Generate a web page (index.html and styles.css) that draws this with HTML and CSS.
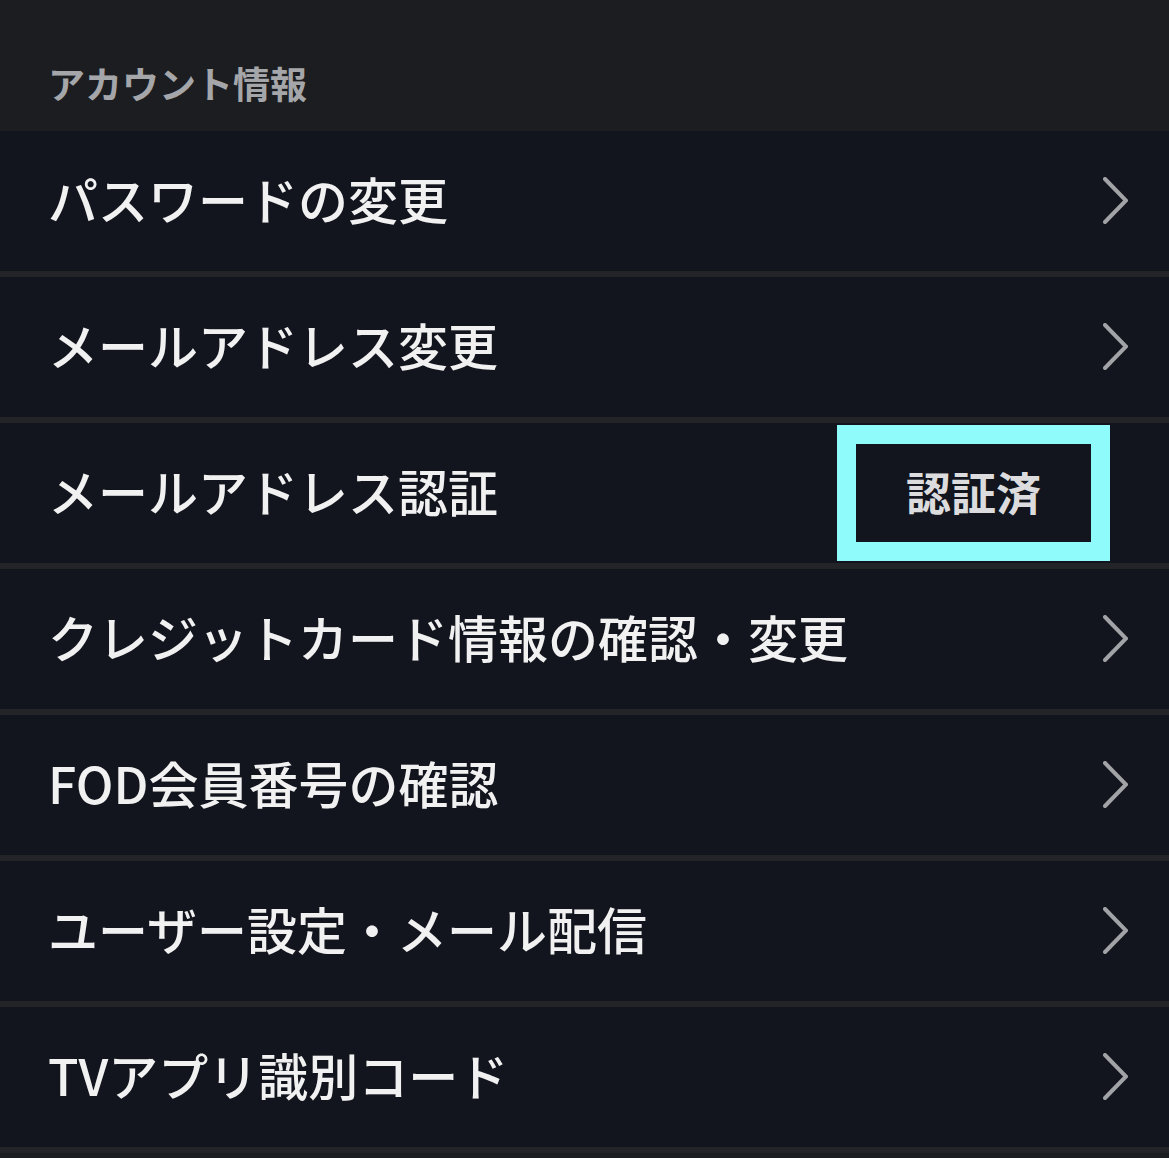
FILE: index.html
```html
<!DOCTYPE html>
<html lang="ja">
<head>
<meta charset="utf-8">
<title>アカウント情報</title>
<link rel="stylesheet" href="styles.css">
</head>
<body>
<div class="page">
  <div class="section-title">アカウント情報</div>
  <ul class="menu">
    <li class="row"><span class="label">パスワードの変更</span><svg class="chev" viewBox="0 0 25 47"><polyline points="2,2 23,23.5 2,45"/></svg></li>
    <li class="row"><span class="label">メールアドレス変更</span><svg class="chev" viewBox="0 0 25 47"><polyline points="2,2 23,23.5 2,45"/></svg></li>
    <li class="row"><span class="label">メールアドレス認証</span><span class="badge">認証済</span></li>
    <li class="row"><span class="label">クレジットカード情報の確認・変更</span><svg class="chev" viewBox="0 0 25 47"><polyline points="2,2 23,23.5 2,45"/></svg></li>
    <li class="row"><span class="label">FOD会員番号の確認</span><svg class="chev" viewBox="0 0 25 47"><polyline points="2,2 23,23.5 2,45"/></svg></li>
    <li class="row"><span class="label">ユーザー設定・メール配信</span><svg class="chev" viewBox="0 0 25 47"><polyline points="2,2 23,23.5 2,45"/></svg></li>
    <li class="row"><span class="label">TVアプリ識別コード</span><svg class="chev" viewBox="0 0 25 47"><polyline points="2,2 23,23.5 2,45"/></svg></li>
  </ul>
</div>
</body>
</html>
```

FILE: styles.css
```css
html, body {
  margin: 0;
  padding: 0;
  background: #1c1d21;
}
body {
  font-family: "Noto Sans CJK JP", "Noto Sans", sans-serif;
}
.page {
  width: 1169px;
}
.section-title {
  box-sizing: border-box;
  height: 131px;
  padding: 56px 0 0 48px;
  font-size: 37px;
  line-height: 54px;
  font-weight: 700;
  color: #a5a6a9;
}
.menu {
  list-style: none;
  margin: 0;
  padding: 0;
}
.row {
  box-sizing: border-box;
  height: 146px;
  border-bottom: 6px solid #232428;
  background: #12151d;
  display: flex;
  align-items: center;
  justify-content: space-between;
  padding: 0 41px 0 48px;
}
.label {
  font-size: 50px;
  line-height: 1.2;
  font-weight: 500;
  color: #f1f1f2;
  white-space: nowrap;
  margin-bottom: 7px;
}
.chev {
  width: 25px;
  height: 47px;
  flex: none;
  margin-bottom: 2px;
}
.chev polyline {
  fill: none;
  stroke: #a2a3a6;
  stroke-width: 4;
  stroke-linecap: round;
  stroke-linejoin: miter;
}
.badge {
  box-sizing: border-box;
  width: 273px;
  height: 136px;
  margin-right: 18px;
  border: 19px solid #8ffcfb;
  background: #12151d;
  display: flex;
  align-items: center;
  justify-content: center;
  font-size: 45px;
  font-weight: 700;
  color: #dcdcde;
  padding-bottom: 4px;
}
```
